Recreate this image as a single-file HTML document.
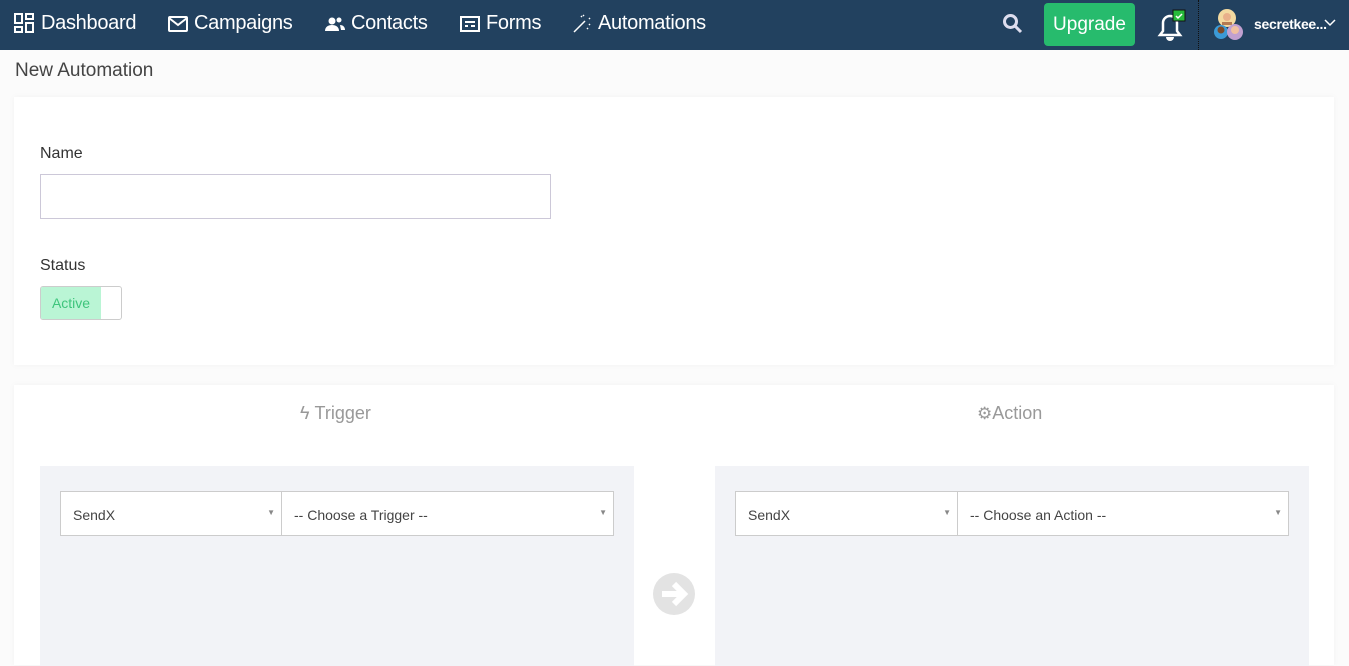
<!DOCTYPE html><html><head><style>
body{margin:0;width:1349px;height:654px;overflow:hidden;background:#fbfbfb;font-family:"Liberation Sans",sans-serif;position:relative}
.nav{position:absolute;left:0;top:0;width:1349px;height:50px;background:#22415f;color:#fff}
.ni{position:absolute;top:12px;font-size:20px;display:flex;align-items:center;gap:6px;letter-spacing:-0.3px}
.ab{position:absolute}
.card{position:absolute;background:#fff;box-shadow:0 0 6px rgba(0,0,0,0.04)}
.lbl{position:absolute;font-size:16px;color:#333}
.sel{position:absolute;top:491px;height:43px;background:#fff;border:1px solid #ccc;font-size:14px;color:#444;line-height:46px;padding-left:12px;box-sizing:content-box}
.sel:after{content:"▼";position:absolute;right:6px;top:-2px;font-size:8px;color:#888}
</style></head><body>
<div class="nav">
<div class="ni" style="left:14px"><svg width="21" height="21" viewBox="0 0 21 21" fill="none" stroke="#fff" stroke-width="2"><rect x="1" y="1" width="7" height="9"/><rect x="12" y="1" width="7" height="5"/><rect x="1" y="14" width="7" height="5"/><rect x="12" y="10" width="7" height="9"/></svg>Dashboard</div>
<div class="ni" style="left:168px"><svg width="20" height="16" viewBox="0 0 20 16" fill="none" stroke="#fff" stroke-width="2"><rect x="1" y="1" width="18" height="14" rx="1"/><path d="M1 2l9 7 9-7"/></svg>Campaigns</div>
<div class="ni" style="left:325px"><svg width="20" height="16" viewBox="0 0 20 16" fill="#fff"><circle cx="7" cy="5" r="3.5"/><path d="M0 15c0-4 3-6 7-6s7 2 7 6z"/><circle cx="14" cy="4" r="2.5"/><path d="M15 9c3 0 5 2 5 5h-4z"/></svg>Contacts</div>
<div class="ni" style="left:460px"><svg width="20" height="16" viewBox="0 0 20 16" fill="none" stroke="#fff" stroke-width="2"><rect x="1" y="1" width="18" height="14"/><path d="M5 6h10M5 10h3M11 10h4"/></svg>Forms</div>
<div class="ni" style="left:572px"><svg width="20" height="20" viewBox="0 0 20 20" fill="none" stroke="#fff" stroke-width="1.5"><path d="M2 18L13 7"/><path d="M9 2l1 1M12 1l-1 1M17 4l1 1M18 10l-1 1M15 14l1 1"/></svg>Automations</div>
<svg class="ab" style="left:1002px;top:13px" width="21" height="21" viewBox="0 0 21 21" fill="none" stroke="#dde" stroke-width="3"><circle cx="8.5" cy="8.5" r="6"/><path d="M13 13l6 6"/></svg>
<div class="ab" style="left:1044px;top:3px;width:91px;height:43px;background:#27bb6d;border-radius:4px;font-size:19px;line-height:43px;text-align:center">Upgrade</div>
<svg class="ab" style="left:1154px;top:9px" width="32" height="32" viewBox="0 0 32 32"><path d="M6 26h20l-3-4v-8a7 7 0 0 0-14 0v8z" fill="none" stroke="#fff" stroke-width="2.5"/><path d="M12 28a4 4 0 0 0 8 0" fill="#fff"/><rect x="19" y="1" width="12" height="11" fill="#27bb3b" stroke="#111"/><path d="M22 7l2 2 4-4" stroke="#fff" stroke-width="1.5" fill="none"/></svg>
<div class="ab" style="left:1198px;top:0;width:1px;height:50px;border-left:1px dotted #111"></div>
<svg class="ab" style="left:1213px;top:8px" width="32" height="32" viewBox="0 0 32 32"><circle cx="14" cy="10" r="9" fill="#f3d9a0"/><circle cx="14" cy="9" r="4" fill="#e9b08a"/><path d="M9 14h10v3H9z" fill="#b57b52"/><circle cx="8" cy="24" r="7" fill="#3b9ad6"/><circle cx="8" cy="22" r="3.5" fill="#7a4a2a"/><circle cx="22" cy="24" r="8" fill="#c0a0d0"/><circle cx="22" cy="22" r="4" fill="#f0c0a0"/></svg>
<div class="ab" style="left:1254px;top:16px;font-size:14px;font-weight:bold;letter-spacing:-0.3px">secretkee...</div>
<svg class="ab" style="left:1324px;top:19px" width="12" height="8" viewBox="0 0 12 8" fill="none" stroke="#fff" stroke-width="1.5"><path d="M1 1l5 5 5-5"/></svg>
</div>
<div class="ab" style="left:15px;top:60px;font-size:19px;color:#444">New Automation</div>
<div class="card" style="left:14px;top:97px;width:1320px;height:268px"></div>
<div class="lbl" style="left:40px;top:145px">Name</div>
<div class="ab" style="left:40px;top:174px;width:509px;height:43px;border:1px solid #ccc8d8;background:#fff"></div>
<div class="lbl" style="left:40px;top:257px">Status</div>
<div class="ab" style="left:40px;top:286px;width:80px;height:32px;border:1px solid #ccc;border-radius:3px;background:#fff;overflow:hidden"><div style="width:60px;height:32px;background:#baf5d5;color:#3ec57c;font-size:14px;line-height:32px;text-align:center">Active</div></div>
<div class="card" style="left:14px;top:385px;width:1320px;height:280px"></div>
<div class="ab" style="left:300px;top:403px;font-size:18px;color:#999">ϟ Trigger</div>
<div class="ab" style="left:977px;top:403px;font-size:18px;color:#999"><span style="font-size:17px">⚙</span>Action</div>
<div class="ab" style="left:40px;top:466px;width:594px;height:200px;background:#f2f3f7"></div>
<div class="ab" style="left:715px;top:466px;width:594px;height:200px;background:#f2f3f7"></div>
<div class="sel" style="left:60px;width:208px">SendX</div>
<div class="sel" style="left:281px;width:319px">-- Choose a Trigger --</div>
<div class="sel" style="left:735px;width:209px">SendX</div>
<div class="sel" style="left:957px;width:318px">-- Choose an Action --</div>
<svg class="ab" style="left:653px;top:573px" width="42" height="42" viewBox="0 0 42 42"><circle cx="21" cy="21" r="21" fill="#e3e3e3"/><path d="M9 21h20M21 11l10 10-10 10" stroke="#fff" stroke-width="6" fill="none"/></svg>
</body></html>
